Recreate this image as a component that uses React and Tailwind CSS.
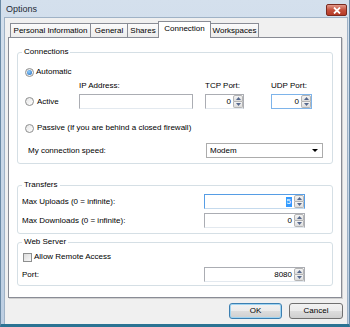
import { useState } from "react";

const tabs = [
  { label: "Personal Information", w: "w-[81px]" },
  { label: "General", w: "w-[38px]" },
  { label: "Shares", w: "w-[32px]" },
  { label: "Connection", w: "w-[53px]" },
  { label: "Workspaces", w: "w-[49px]" },
];

const Arrow = ({ up }) => (
  <svg width="5" height="3" viewBox="0 0 5 3">
    <path d={up ? "M0 3L2.5 0L5 3Z" : "M0 0L2.5 3L5 0Z"} fill="#56688c" />
  </svg>
);

const Spin = ({ value, w, selected, border }) => (
  <div className={`flex h-[15px] ${w} bg-white border ${border || "border-[#abadb3] border-b-[#e3e9ef]"}`}>
    <div className="flex-1 flex items-center justify-end pr-[2px]">
      {selected ? (
        <span className="bg-[#3399ff] text-white px-px leading-[10px]">{value}</span>
      ) : (
        <span>{value}</span>
      )}
    </div>
    <div className="w-[10px] flex flex-col">
      <div className="flex-1 flex items-center justify-center bg-[linear-gradient(#f4f4f4,#dcdcdc)] border border-[#b4b4b4] rounded-t-[2px]">
        <Arrow up />
      </div>
      <div className="flex-1 flex items-center justify-center bg-[linear-gradient(#f4f4f4,#dcdcdc)] border border-t-0 border-[#b4b4b4] rounded-b-[2px]">
        <Arrow />
      </div>
    </div>
  </div>
);

const Radio = ({ checked }) => (
  <div className="w-[9px] h-[9px] rounded-full border border-[#8e8f8f] bg-[linear-gradient(135deg,#e6e6e6,#ffffff)] flex items-center justify-center">
    {checked && (
      <div className="w-[5px] h-[5px] rounded-full bg-[radial-gradient(circle_at_40%_35%,#8fd0ff,#1c63b8)]" />
    )}
  </div>
);

const Group = ({ title, className, children }) => (
  <fieldset className={`ml-[8px] w-[316px] border border-[#d5dfe5] rounded-[3px] ${className}`}>
    <legend className="ml-[4px] px-[2px] leading-[10px]">{title}</legend>
    {children}
  </fieldset>
);

const Btn = ({ label, def }) => (
  <button
    className={`h-[16px] rounded-[3px] border bg-[linear-gradient(#f2f2f2_0%,#ebebeb_50%,#dddddd_51%,#cfcfcf_100%)] flex items-center justify-center ${
      def ? "w-[53px] border-[#3c7fb1] shadow-[inset_0_0_0_1px_#9fd4f2]" : "w-[54px] border-[#707070]"
    }`}
  >
    {label}
  </button>
);

export default function App() {
  const [active] = useState(3);

  return (
    <div className="w-[350px] h-[327px] flex flex-col bg-[linear-gradient(#d4e0ed,#bccee2)] border-l border-r border-[#6a8aa6] border-b-[3px] border-b-[#2b7393] pr-[1px] font-['Liberation_Sans',Arial,sans-serif] text-[8px] leading-[10px] text-black">
      <div className="h-[17px] flex items-center justify-between pl-[5px] pr-[1px]">
        <span className="text-[9px] text-[#1e2a36]">Options</span>
        <div className="w-[21px] h-[12px] mt-[3px] rounded-[2px] border border-[#7a2a20] bg-[linear-gradient(#e29a8c,#c5503d_50%,#b53a26)] flex items-center justify-center">
          <svg width="8" height="7" viewBox="0 0 8 7">
            <path d="M1 0.5L7 6.5M7 0.5L1 6.5" stroke="#ffffff" strokeWidth="1.8" />
          </svg>
        </div>
      </div>

      <div className="flex-1 ml-[3px] border-l border-t border-r border-[#9fb2c6] bg-[#f0f0f0] px-[3px] pt-[3px] pb-[5px] flex flex-col">
        <div className="flex items-end h-[17px] pl-[2px] -mb-px relative z-10">
          {tabs.map((t, i) => (
            <div
              key={t.label}
              className={`${t.w} ${i > 0 ? "-ml-px" : ""} flex items-center justify-center border border-b-0 border-[#898c95] ${
                i === active
                  ? "h-[17px] bg-white pb-[2px] relative z-10"
                  : "h-[14px] mb-px bg-[linear-gradient(#fbfbfb,#ececec)]"
              }`}
            >
              {t.label}
            </div>
          ))}
        </div>

        <div className="w-[334px] h-[261px] bg-white border border-[#898c95] shadow-[1px_1px_0_#d0d0d0] pt-[9px]">
          <Group title="Connections" className="pb-[5px]">
            <div className="mt-[10px] h-[10px] flex items-center pl-[7px]">
              <Radio checked />
              <span className="ml-[2px]">Automatic</span>
            </div>

            <div className="mt-[4px] flex items-end">
              <div className="w-[60px] h-[15px] pl-[7px] flex items-center">
                <Radio />
                <span className="ml-[3px]">Active</span>
              </div>
              <div className="ml-px w-[114px]">
                <div className="h-[10px]">IP Address:</div>
                <div className="mt-[3px] h-[15px] bg-white border border-[#abadb3] border-b-[#e3e9ef]" />
              </div>
              <div className="ml-[12px] w-[39px]">
                <div className="h-[10px]">TCP Port:</div>
                <div className="mt-[3px]">
                  <Spin value="0" w="w-[39px]" />
                </div>
              </div>
              <div className="ml-[27px] w-[41px]">
                <div className="h-[10px]">UDP Port:</div>
                <div className="mt-[3px]">
                  <Spin value="0" w="w-[41px]" border="border-[#7eb4ea]" />
                </div>
              </div>
            </div>

            <div className="mt-[14px] h-[10px] flex items-center pl-[7px]">
              <Radio />
              <span className="ml-[3px]">Passive (If you are behind a closed firewall)</span>
            </div>

            <div className="mt-[10px] h-[15px] flex items-center">
              <span className="ml-[10px]">My connection speed:</span>
              <div className="ml-auto mr-[9px] w-[117px] h-[15px] bg-white border border-[#acacac] flex items-center justify-between pl-[3px] pr-[4px]">
                <span>Modem</span>
                <svg width="6" height="3" viewBox="0 0 6 3">
                  <path d="M0 0L3 3L6 0Z" fill="#000000" />
                </svg>
              </div>
            </div>
          </Group>

          <Group title="Transfers" className="mt-[16px] pb-[5px]">
            <div className="mt-[4px] h-[15px] flex items-center">
              <span className="ml-[4px]">Max Uploads (0 = infinite):</span>
              <div className="ml-auto mr-[27px]">
                <Spin value="5" w="w-[101px]" selected border="border-[#569de5] border-b-[#c5daed]" />
              </div>
            </div>
            <div className="mt-[4px] h-[15px] flex items-center">
              <span className="ml-[4px]">Max Downloads (0 = infinite):</span>
              <div className="ml-auto mr-[27px]">
                <Spin value="0" w="w-[101px]" />
              </div>
            </div>
          </Group>

          <Group title="Web Server" className="mt-[3px] pb-[3px]">
            <div className="mt-[5px] h-[10px] flex items-center pl-[5px]">
              <div className="w-[9px] h-[9px] border border-[#8e8f8f] bg-[linear-gradient(135deg,#dcdcdc,#f8f8f8)]" />
              <span className="ml-[2px]">Allow Remote Access</span>
            </div>
            <div className="mt-[5px] h-[15px] flex items-center">
              <span className="ml-[4px]">Port:</span>
              <div className="ml-auto mr-[27px]">
                <Spin value="8080" w="w-[101px]" />
              </div>
            </div>
          </Group>
        </div>

        <div className="mt-[5px] flex justify-end gap-[7px] pr-px">
          <Btn label="OK" def />
          <Btn label="Cancel" />
        </div>
      </div>
    </div>
  );
}
